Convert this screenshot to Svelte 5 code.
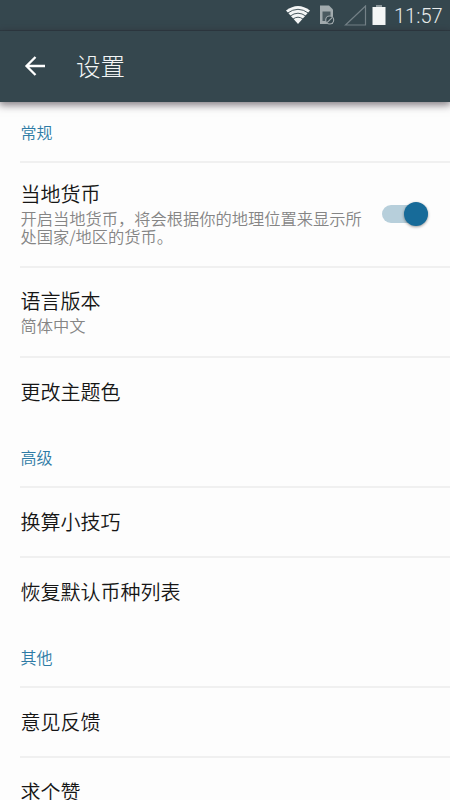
<script lang="ts">
	let localCurrency = $state(true);

	const sections = [
		{
			title: '常规',
			items: [
				{
					title: '当地货币',
					summary: '开启当地货币，将会根据你的地理位置来显示所处国家/地区的货币。',
					toggle: true
				},
				{ title: '语言版本', summary: '简体中文' },
				{ title: '更改主题色' }
			]
		},
		{
			title: '高级',
			items: [{ title: '换算小技巧' }, { title: '恢复默认币种列表' }]
		},
		{
			title: '其他',
			items: [{ title: '意见反馈' }, { title: '求个赞' }]
		}
	];
</script>

<div class="screen">
	<div class="status">
		<svg class="wifi" width="26" height="20" viewBox="0 0 26 20">
			<path d="M1 5.6Q13-3.6 25 5.6L13 19Z" fill="#f4f6f6" />
			<path d="M2.4 8.2Q13 .4 23.6 8.2M5 11.2Q13 5.2 21 11.2M7.8 14.2Q13 10.2 18.2 14.2" fill="none" stroke="#35474e" stroke-width=".9" />
		</svg>
		<svg class="sim" width="16" height="20" viewBox="0 0 16 20">
			<path d="M1 .5H10L14 4.5V19H1Z" fill="#a2abae" />
			<path d="M3.5 6.5H11.5V16H3.5Z" fill="#4b5b61" />
			<circle cx="10.7" cy="15" r="4" fill="#35474e" stroke="#a2abae" stroke-width="1.1" />
			<path d="M8 17.7L13.4 12.3" stroke="#a2abae" stroke-width="1.1" />
		</svg>
		<svg class="signal" width="23" height="21" viewBox="0 0 23 21">
			<path d="M1.5 20L21.5 1V20Z" fill="none" stroke="#748187" stroke-width="1.2" />
		</svg>
		<svg class="battery" width="14" height="20" viewBox="0 0 14 20">
			<path d="M4 0H10V2H13.5V20H.5V2H4Z" fill="#f4f6f6" />
			<path d="M4 0H10V2H4Z" fill="#8d989c" />
		</svg>
		<span class="time">11:57</span>
	</div>

	<header>
		<button class="back" aria-label="返回">
			<svg width="22" height="20" viewBox="0 0 22 20">
				<path d="M11.5 1L2.5 10L11.5 19M2.5 10H21" fill="none" stroke="#fff" stroke-width="2.3" />
			</svg>
		</button>
		<h1>设置</h1>
	</header>

	<main>
		{#each sections as section}
			<section>
				<h2>{section.title}</h2>
				{#each section.items as item}
					<div class="item" class:withSummary={item.summary} class:withToggle={item.toggle}>
						<div class="text">
							<div class="title">{item.title}</div>
							{#if item.summary}
								<div class="summary">{item.summary}</div>
							{/if}
						</div>
						{#if item.toggle}
							<button
								class="switch"
								class:on={localCurrency}
								role="switch"
								aria-checked={localCurrency}
								aria-label={item.title}
								onclick={() => (localCurrency = !localCurrency)}
							>
								<span class="thumb"></span>
							</button>
						{/if}
					</div>
				{/each}
			</section>
		{/each}
	</main>
</div>

<style>
:global(body) {
	background: #fdfdfd;
	overflow: hidden;
}
button {
	all: unset;
	cursor: pointer;
}
.screen {
	display: flex;
	flex-direction: column;
	width: 450px;
	height: 800px;
	overflow: hidden;
	background: #fdfdfd;
	font-family: "Noto Sans CJK SC", sans-serif;
	font-weight: 350;
}
.status {
	display: flex;
	flex: none;
	align-items: center;
	justify-content: flex-end;
	box-sizing: border-box;
	height: 31px;
	padding-right: 8px;
	background: #35474e;
	border-bottom: 1px solid #2c3c43;
}
.status svg {
	display: block;
}
.wifi {
	margin-right: 8px;
}
.sim {
	margin-right: 9px;
}
.signal {
	margin-right: 5px;
}
.battery {
	margin-right: 8px;
}
.time {
	width: 48px;
	color: #e8ecec;
	font-family: Roboto, sans-serif;
	font-weight: 300;
	font-size: 20px;
	line-height: 30px;
	padding-top: 2px;
	white-space: nowrap;
}
header {
	display: flex;
	flex: none;
	align-items: center;
	box-sizing: border-box;
	height: 71px;
	padding: 0 0 2px 24px;
	background: #35474e;
	box-shadow: 0 2px 8px 1px rgba(45, 35, 45, 0.6);
}
.back svg {
	display: block;
}
h1 {
	margin: 0 0 0 30px;
	color: #f3f6f6;
	font-size: 24.5px;
	font-weight: 300;
	line-height: 36px;
}
main {
	flex: 1;
	min-height: 0;
	padding-top: 1px;
}
h2 {
	box-sizing: border-box;
	height: 60px;
	margin: 0 0 0 20px;
	padding-left: 0.5px;
	border-bottom: 2px solid #f0f0f0;
	color: #2e7ba5;
	font-size: 16px;
	font-weight: 350;
	line-height: 58px;
}
.item {
	display: flex;
	justify-content: space-between;
	box-sizing: border-box;
	height: 70px;
	margin-left: 20px;
	padding: 19px 22px 0 0.5px;
	border-bottom: 2px solid #f0f0f0;
}
.item:last-child {
	border-bottom-color: transparent;
}
.withSummary {
	height: 90px;
	padding-top: 18px;
}
.withToggle {
	height: 105px;
	padding-top: 16px;
}
.text {
	width: 346px;
}
.title {
	color: #161616;
	font-size: 20px;
	line-height: 30px;
}
.summary {
	color: #858585;
	font-size: 16.25px;
	line-height: 18px;
}
.switch {
	position: relative;
	flex: none;
	width: 46px;
	height: 18px;
	margin-top: 26px;
	border-radius: 9px;
	background: #d0d0d0;
}
.thumb {
	position: absolute;
	top: -3px;
	left: 0;
	width: 24px;
	height: 24px;
	border-radius: 50%;
	background: #f4f4f4;
	box-shadow: 0 1px 3px rgba(0, 0, 0, 0.4);
}
.on {
	background: #b7cfdb;
}
.on .thumb {
	left: 22px;
	background: #176b99;
}
</style>
